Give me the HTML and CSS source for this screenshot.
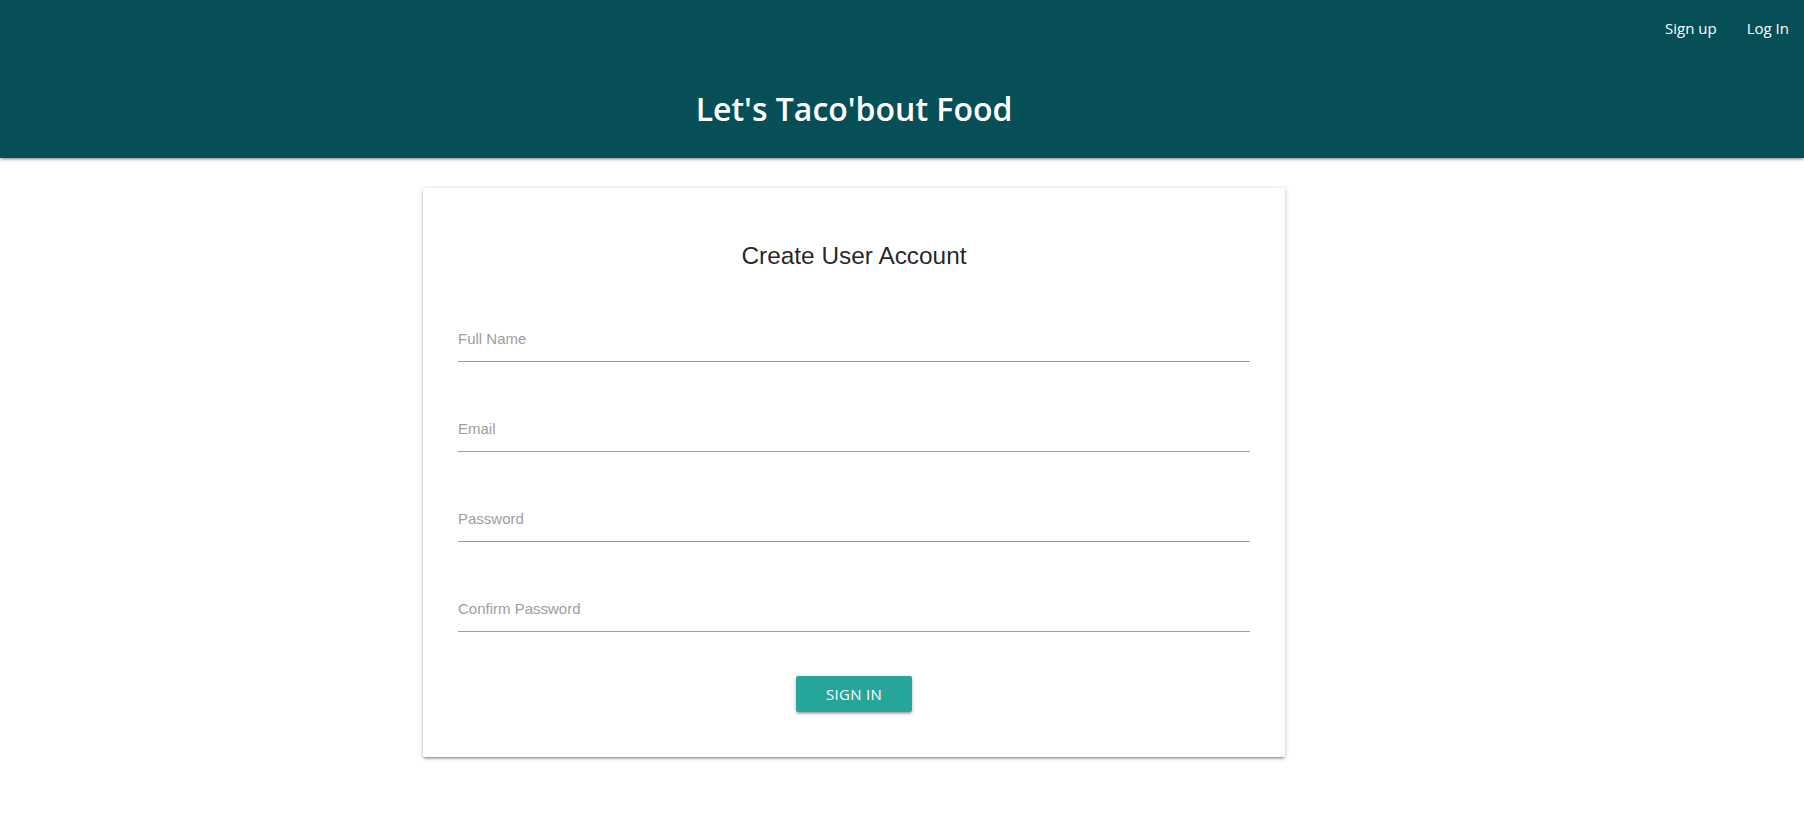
FILE: index.html
```html
<!DOCTYPE html>
<html lang="en">
<head>
<meta charset="utf-8">
<title>Let's Taco'bout Food</title>
<link rel="stylesheet" href="styles.css">
</head>
<body>
<header class="topbar">
  <nav class="nav">
    <a class="nav-link" href="#">Sign up</a>
    <a class="nav-link" href="#">Log In</a>
  </nav>
  <div class="shell">
    <h1 class="brand">Let's Taco'bout Food</h1>
  </div>
</header>
<main class="shell main">
  <section class="card">
    <h2 class="card-title">Create User Account</h2>
    <form class="form">
      <input class="field" type="text" placeholder="Full Name">
      <input class="field" type="email" placeholder="Email">
      <input class="field" type="password" placeholder="Password">
      <input class="field" type="password" placeholder="Confirm Password">
      <button class="btn" type="button">Sign in</button>
    </form>
  </section>
</main>
</body>
</html>
```

FILE: styles.css
```css
* { box-sizing: border-box; }

body {
  margin: 0;
  background: #ffffff;
  font-family: "Open Sans", "Liberation Sans", sans-serif;
}

.topbar {
  background: #074f57;
  height: 158px;
  display: flex;
  flex-direction: column;
  box-shadow: 0 2px 2px 0 rgba(0,0,0,.14), 0 3px 1px -2px rgba(0,0,0,.12), 0 1px 5px 0 rgba(0,0,0,.2);
  position: relative;
  z-index: 1;
}

.nav {
  height: 56px;
  display: flex;
  justify-content: flex-end;
}

.nav-link {
  color: #ffffff;
  text-decoration: none;
  font-size: 15px;
  line-height: 56px;
  padding: 0 15px;
}

.shell {
  display: flex;
  justify-content: center;
  padding-right: 96px;
}

.brand {
  width: 862px;
  margin: 31px 0 0;
  text-align: center;
  color: #ffffff;
  font-size: 32px;
  font-weight: 600;
  line-height: 44px;
}

.main {
  padding-top: 30px;
  padding-bottom: 20px;
}

.card {
  width: 862px;
  background: #ffffff;
  border-radius: 2px;
  padding: 54px 35px 45px;
  box-shadow: 0 2px 2px 0 rgba(0,0,0,.16), 0 3px 1px -2px rgba(0,0,0,.14), 0 1px 5px 0 rgba(0,0,0,.22);
}

.card-title {
  margin: 0;
  text-align: center;
  font-family: "Liberation Sans", Arial, sans-serif;
  font-weight: 400;
  font-size: 24.4px;
  line-height: 28px;
  color: rgba(0,0,0,.87);
}

.form {
  display: flex;
  flex-direction: column;
  align-items: center;
  gap: 45px;
  margin-top: 47px;
}

.field {
  width: 100%;
  height: 45px;
  border: none;
  border-bottom: 1px solid #9e9e9e;
  padding: 0 0 2px;
  outline: none;
  background: transparent;
  font-family: "Liberation Sans", Arial, sans-serif;
  font-size: 15px;
  color: rgba(0,0,0,.87);
}

.field::placeholder {
  color: #9e9e9e;
  opacity: 1;
}

.btn {
  margin-top: -1px;
  height: 36px;
  padding: 0 30px;
  border: none;
  border-radius: 2px;
  background: #26a69a;
  color: #ffffff;
  font-family: "Open Sans", "Liberation Sans", sans-serif;
  font-size: 15px;
  line-height: 36px;
  letter-spacing: 0.3px;
  text-transform: uppercase;
  cursor: pointer;
  box-shadow: 0 2px 2px 0 rgba(0,0,0,.14), 0 3px 1px -2px rgba(0,0,0,.12), 0 1px 5px 0 rgba(0,0,0,.2);
}
```
